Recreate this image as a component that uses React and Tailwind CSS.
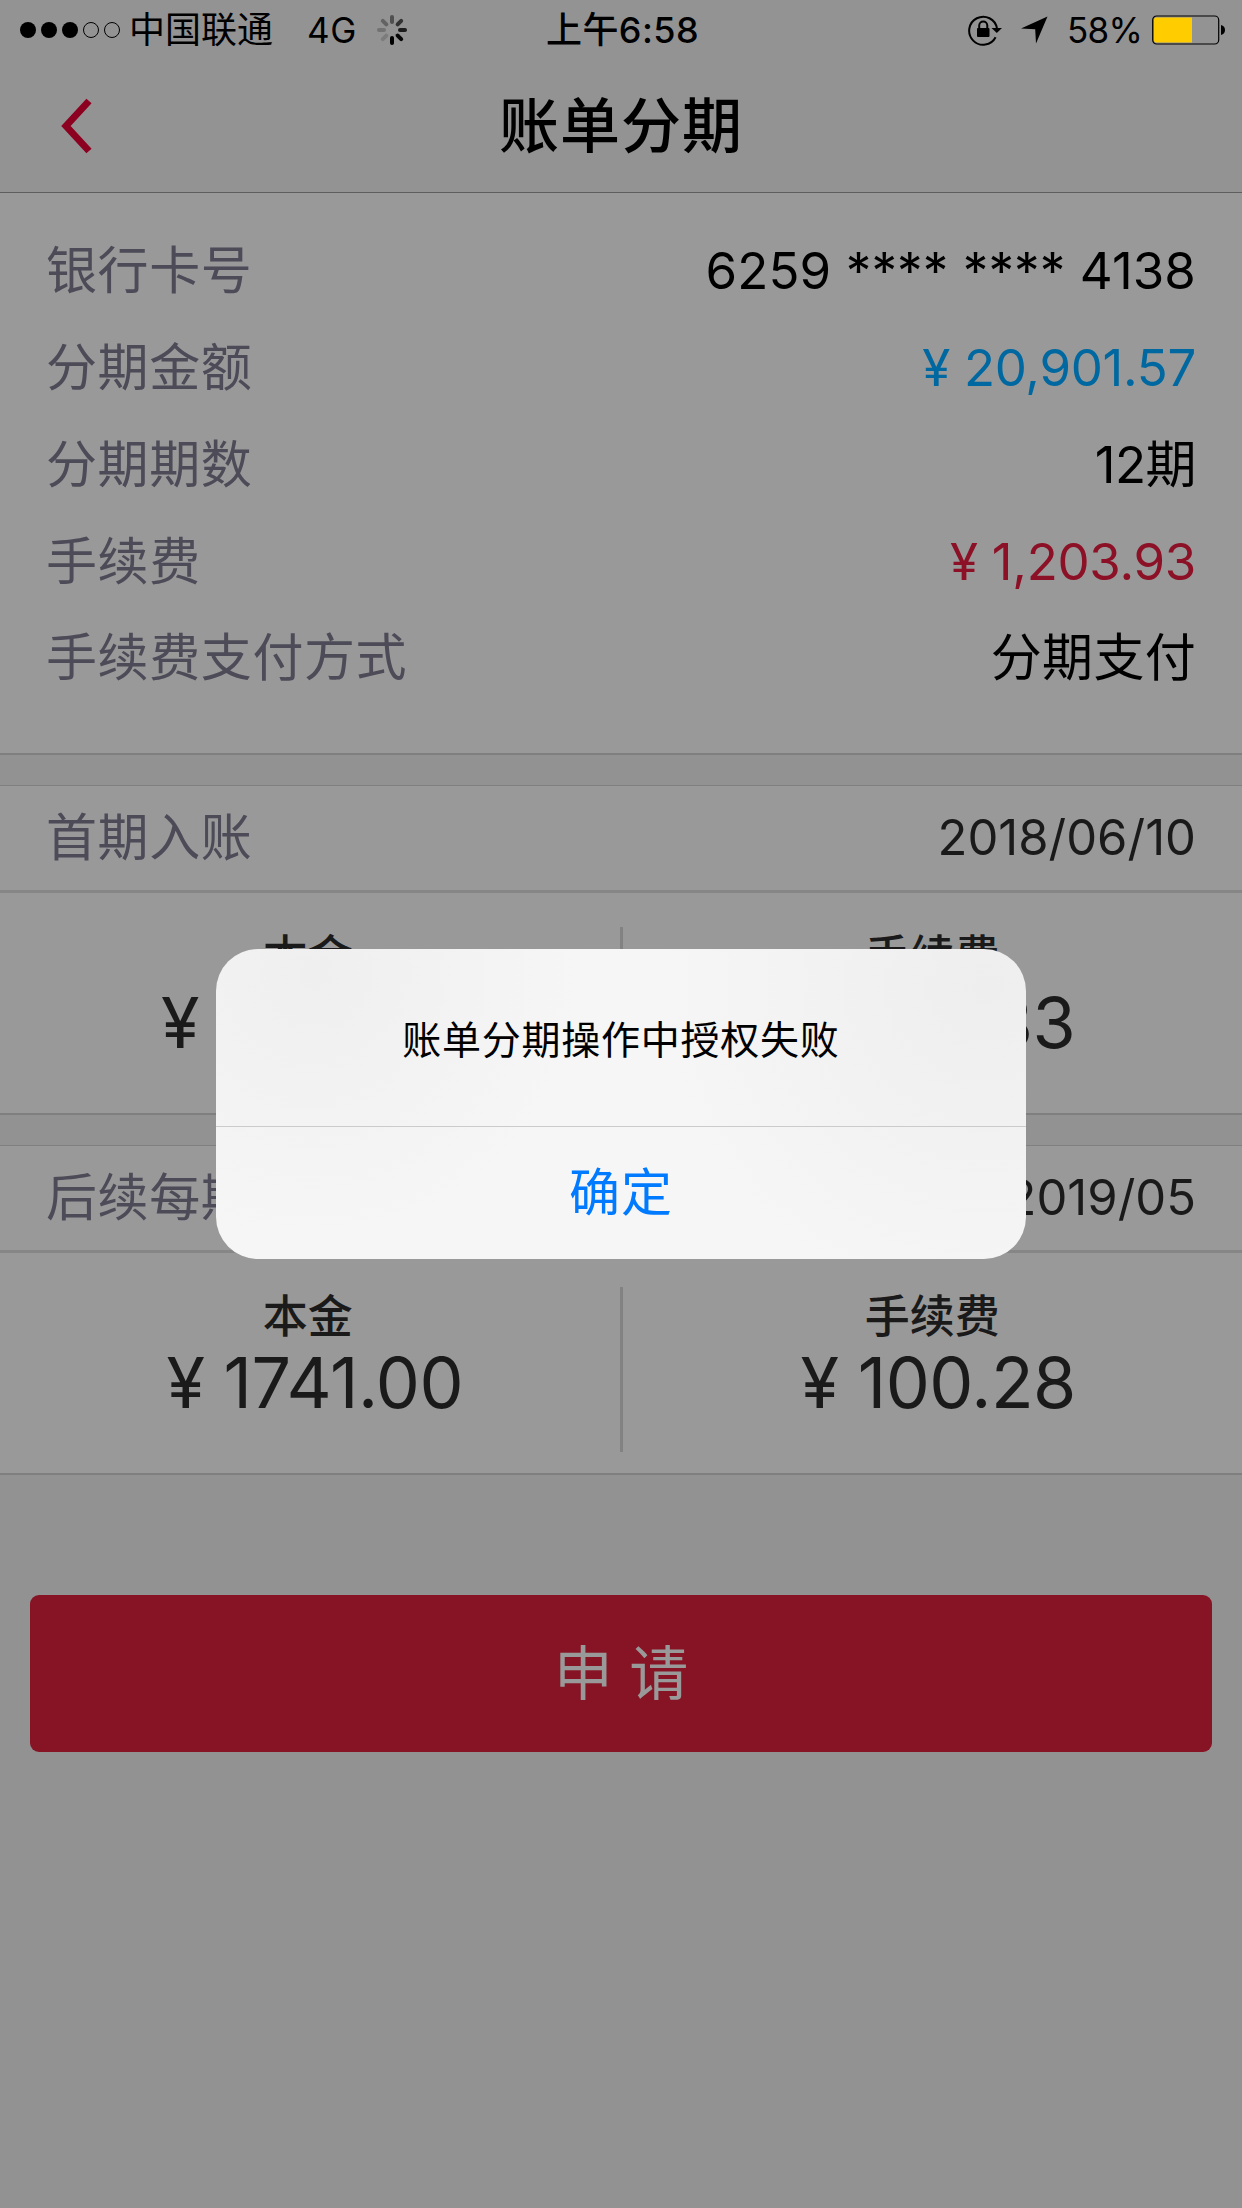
import React from 'react';

const details = [
    { label: '银行卡号', value: '6259 **** **** 4138', color: 'text-black', spacing: 'tracking-[0.1px]' },
    { label: '分期金额', value: '¥ 20,901.57', color: 'text-[#0068a0]', spacing: 'tracking-[-0.3px]' },
    { label: '分期期数', value: '12期', color: 'text-black', spacing: 'tracking-[-0.5px]' },
    { label: '手续费', value: '¥ 1,203.93', color: 'text-[#8c1026]', spacing: 'tracking-[-0.3px]' },
    { label: '手续费支付方式', value: '分期支付', color: 'text-black', spacing: 'tracking-[0.3px]' },
];

const SignalDots = () => (
    <svg width="102" height="18" viewBox="0 0 102 18">
        <circle cx="9" cy="9" r="8" />
        <circle cx="30" cy="9" r="8" />
        <circle cx="51" cy="9" r="8" />
        <circle cx="72" cy="9" r="7.5" fill="none" stroke="black" />
        <circle cx="93" cy="9" r="7.5" fill="none" stroke="black" />
    </svg>
);

const Spinner = () => {
    const opacities = [0.45, 0.65, 0.8, 0.95, 1, 0.15, 0.22, 0.32];
    return (
        <svg width="32" height="32" viewBox="-16 -16 32 32">
            {opacities.map((opacity, i) => (
                <line
                    key={i}
                    y1="-13"
                    y2="-8"
                    stroke="black"
                    strokeWidth="4"
                    strokeLinecap="round"
                    opacity={opacity}
                    transform={`rotate(${i * 45})`}
                />
            ))}
        </svg>
    );
};

const RotationLock = () => (
    <svg width="36" height="32" viewBox="0 0 36 32">
        <path d="M28.6 23.2 A14 14 0 1 1 30 14.5" fill="none" stroke="black" strokeWidth="2" />
        <path d="M24.5 14 H35 L29.8 19 Z" />
        <rect x="10" y="14" width="12.5" height="9" rx="1" />
        <path d="M12.2 15 V11.5 A4 4 0 0 1 20.3 11.5 V15" fill="none" stroke="black" strokeWidth="2" />
    </svg>
);

const LocationArrow = () => (
    <svg width="27" height="28" viewBox="0 0 27 28">
        <path d="M0 12.5 L26.5 0.5 L15 27.5 L14.2 13.3 Z" />
    </svg>
);

const Battery = () => (
    <svg width="74" height="30" viewBox="0 0 74 30">
        <rect x="0.7" y="1" width="66" height="28" rx="4" fill="none" stroke="black" strokeWidth="1.2" />
        <path d="M4 2.5 H40 V27.5 H4 Q2 27.5 2 25.5 V4.5 Q2 2.5 4 2.5 Z" fill="#ffcc00" />
        <path d="M69 10 Q73 11 73 15 Q73 19 69 20 Z" />
    </svg>
);

const StatusBar = () => (
    <div className="flex h-[60px] items-center justify-between pl-[19px] pr-[16px] text-[36px] leading-[60px]">
        <div className="flex w-[480px] items-center">
            <SignalDots />
            <span className="ml-[8px]">中国联通</span>
            <span className="ml-[34px] text-[35px] tracking-[0.5px]">4G</span>
            <span className="ml-[19px]">
                <Spinner />
            </span>
        </div>
        <div className="font-medium tracking-[0.4px]">上午6:58</div>
        <div className="flex w-[480px] items-center justify-end">
            <RotationLock />
            <span className="ml-[18px]">
                <LocationArrow />
            </span>
            <span className="ml-[19px] text-[35px] tracking-[-0.8px]">58%</span>
            <span className="ml-[10px]">
                <Battery />
            </span>
        </div>
    </div>
);

const NavBar = () => (
    <div className="grid h-[132px] grid-cols-3 items-center">
        <svg className="ml-[60px]" width="34" height="60" viewBox="0 0 34 60">
            <path d="M29 5 L6 30 L29 55" fill="none" stroke="#8c0020" strokeWidth="7" />
        </svg>
        <h1 className="text-center text-[60px] font-medium leading-[132px] tracking-[1px]">账单分期</h1>
    </div>
);

const Amount = ({ label, value, valueClass }) => (
    <div className="flex-1 text-center text-[#1a1a1a]">
        <div className={`text-[45px] font-medium leading-[60px] ${valueClass.label}`}>{label}</div>
        <div className={`text-[70px] leading-[72px] ${valueClass.value}`}>{value}</div>
    </div>
);

const Plan = ({ title, date, children }) => (
    <section className="h-[330px] border-b-2 border-t border-b-[#7f7f7f] border-t-[#808080] bg-[#999999]">
        <div className="flex h-[107px] items-center justify-between border-b-3 border-[#868686] px-[46px]">
            <span className="text-[51px] tracking-[0.6px] text-[#4c4b57]">{title}</span>
            <span className="text-[49px] text-[#1a1a1a]">{date}</span>
        </div>
        <div className="flex pt-[34px]">{children}</div>
    </section>
);

const Divider = () => <div className="h-[165px] w-[3px] bg-[#828282]" />;

const Alert = () => (
    <div className="absolute inset-0 flex items-center justify-center">
        <div className="h-[310px] w-[810px] overflow-hidden rounded-[42px] bg-[#f6f6f7] bg-[radial-gradient(circle_at_12%_8%,#efefef_0%,transparent_35%),radial-gradient(circle_at_95%_12%,#eeeeee_0%,transparent_40%)]">
            <div className="flex h-[178px] items-center justify-center border-b border-[#cbcbcc] text-[39px] tracking-[0.75px]">
                <p className="pt-[6px]">账单分期操作中授权失败</p>
            </div>
            <button className="block h-[132px] w-full text-center text-[51px] leading-[132px] tracking-[1px] text-[#007aff]">
                确定
            </button>
        </div>
    </div>
);

const left = { label: 'pr-[4px]', value: 'pl-[10px] tracking-[-0.5px]' };
const right = { label: 'pl-[0px]', value: 'pl-[12px] tracking-[-0.5px]' };

export default function App() {
    return (
        <div className="relative h-[2208px] w-[1242px] overflow-hidden bg-[#929292] font-['Inter','Noto_Sans_CJK_SC',sans-serif] text-black">
            <header className="h-[193px] border-b border-[#5e5e5f] bg-[#939394]">
                <StatusBar />
                <NavBar />
            </header>

            <section className="h-[562px] border-b-2 border-[#7f7f7f] bg-[#999999] px-[46px] pt-[30px]">
                {details.map((row) => (
                    <div key={row.label} className="flex h-[96.8px] items-center justify-between text-[51px]">
                        <span className="tracking-[0.6px] text-[#4c4b57]">{row.label}</span>
                        <span className={`${row.color} ${row.spacing}`}>{row.value}</span>
                    </div>
                ))}
            </section>

            <div className="mt-[30px] flex flex-col gap-[30px]">
                <Plan title="首期入账" date="2018/06/10">
                    <Amount label="本金" value="¥ 1750.57" valueClass={left} />
                    <Divider />
                    <Amount label="手续费" value="¥ 100.33" valueClass={right} />
                </Plan>
                <Plan title="后续每期" date="2018/07-2019/05">
                    <Amount label="本金" value="¥ 1741.00" valueClass={left} />
                    <Divider />
                    <Amount label="手续费" value="¥ 100.28" valueClass={right} />
                </Plan>
            </div>

            <button className="mx-[30px] mt-[120px] block h-[157px] w-[1182px] rounded-[9px] bg-[#871425] text-center text-[59px] leading-[157px] text-[#999999]">
                申 请
            </button>

            <Alert />
        </div>
    );
}
